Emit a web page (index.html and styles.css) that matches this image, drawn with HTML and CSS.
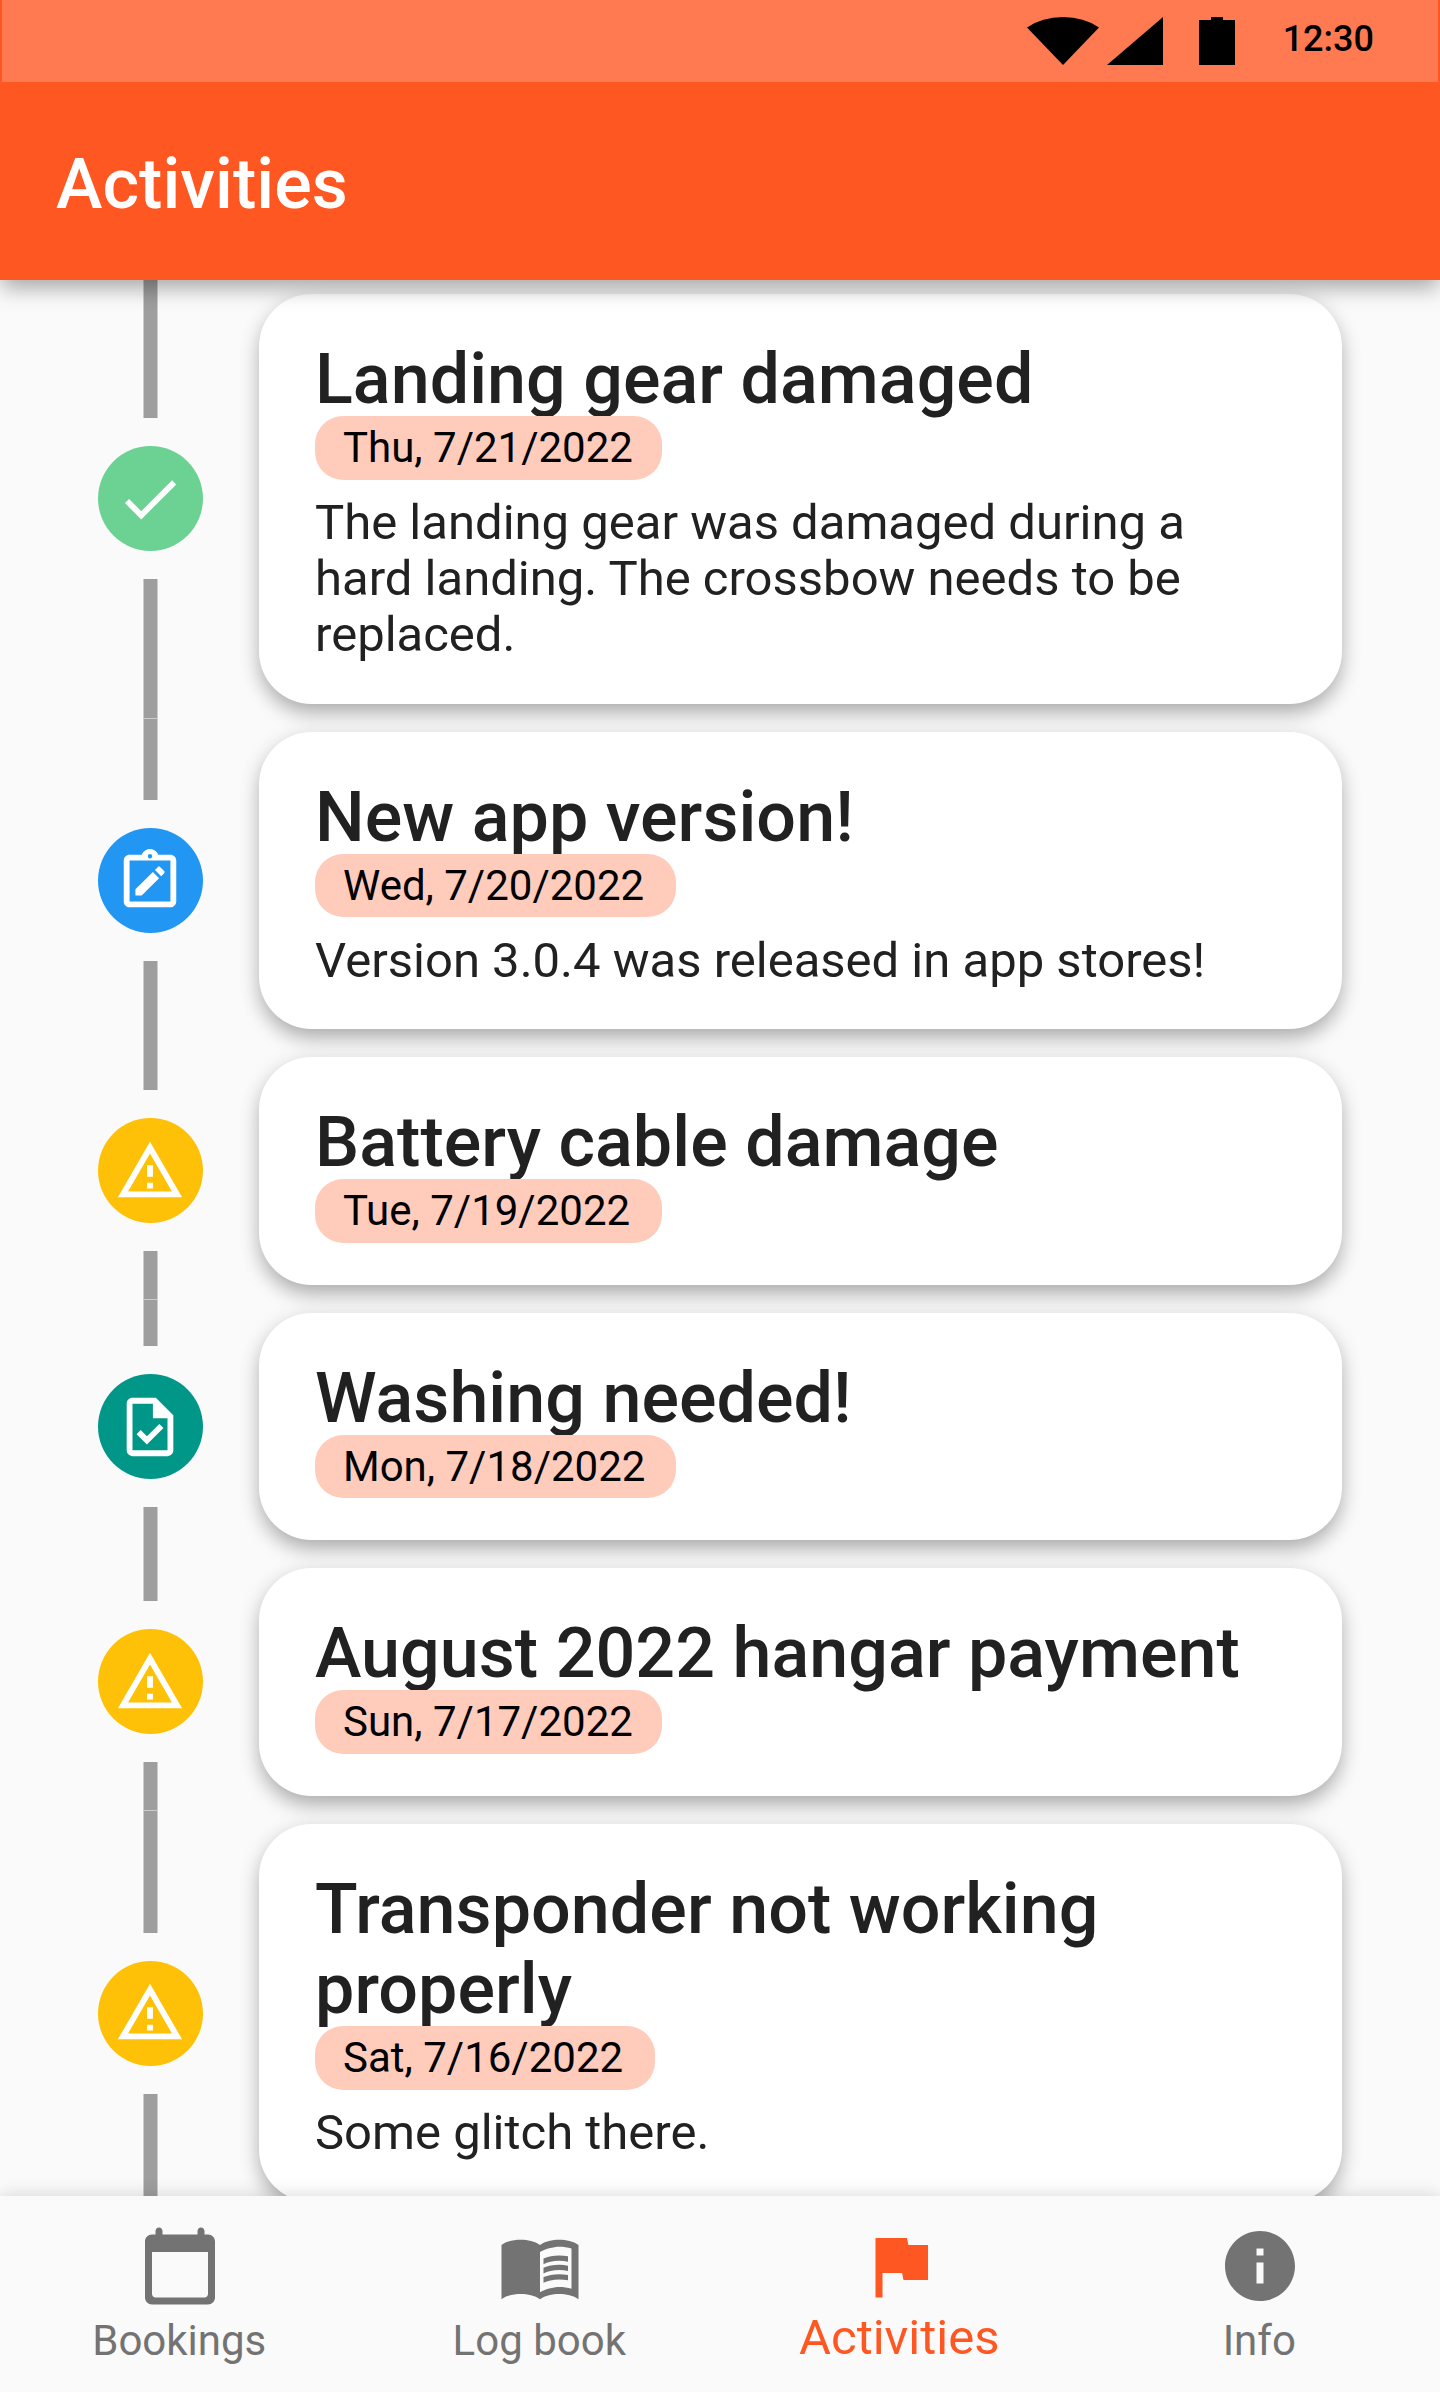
FILE: index.html
```html
<!DOCTYPE html>
<html lang="en">
<head>
<meta charset="utf-8">
<title>Activities</title>
<link rel="stylesheet" href="styles.css">
</head>
<body>
<svg class="sprite" aria-hidden="true">
  <symbol id="i-check" viewBox="0 0 24 24"><path d="M9 16.17L4.83 12l-1.42 1.41L9 19 21 7l-1.41-1.41z"/></symbol>
  <symbol id="i-edit" viewBox="0 0 24 24"><path fill-rule="evenodd" d="M19 3h-4.18C14.4 1.84 13.3 1 12 1s-2.4.84-2.82 2H5c-1.1 0-2 .9-2 2v14c0 1.1.9 2 2 2h14c1.1 0 2-.9 2-2V5c0-1.1-.9-2-2-2zm-7-.25a.75.75 0 1 1 0 1.5.75.75 0 0 1 0-1.5zM5 5h14v14H5z"/><path d="M7 14.85V17h2.15l5.96-5.95-2.12-2.12zM16.85 8.6l-1.4-1.4c-.2-.2-.51-.2-.71 0l-1.04 1.03 2.12 2.12 1.03-1.04c.2-.2.2-.51 0-.71z"/></symbol>
  <symbol id="i-warn" viewBox="0 0 24 24"><path d="M12 5.99L19.53 19H4.47L12 5.99M12 2L1 21h22L12 2zm1 14h-2v2h2v-2zm0-6h-2v4h2v-4z"/></symbol>
  <symbol id="i-task" viewBox="0 0 24 24"><path d="M14 2H6c-1.1 0-1.99.9-1.99 2L4 20c0 1.1.89 2 1.99 2H18c1.1 0 2-.9 2-2V8l-6-6zm4 18H6V4h7v5h5v11zM8.82 13.05L7.4 14.46 10.94 18l5.66-5.66-1.41-1.41-4.24 4.24-2.13-2.12z"/></symbol>
</svg>

<div class="app">
  <header class="appbar">
    <div class="status">
      <svg class="wifi" viewBox="0 0 72 48"><path d="M36 48L0 10.500Q15 0 36 0T72 10.500z"/></svg>
      <svg class="cell" viewBox="0 0 56 48"><path d="M56 0V48H0z"/></svg>
      <svg class="battery" viewBox="0 0 36 48"><path d="M12 0h12v3h12v45H0V3h12z"/></svg>
      <span class="clock">12:30</span>
    </div>
    <h1 class="heading">Activities</h1>
  </header>

  <main class="list">
    <section class="tile">
      <div class="rail"><i class="bar"></i><span class="dot green"><svg><use href="#i-check"/></svg></span><i class="bar"></i></div>
      <article class="card"><h2 class="title">Landing gear damaged</h2><span class="date">Thu, 7/21/2022</span><p class="text">The landing gear was damaged during a hard landing. The crossbow needs to be replaced.</p></article>
    </section>
    <section class="tile">
      <div class="rail"><i class="bar seam"></i><span class="dot blue"><svg><use href="#i-edit"/></svg></span><i class="bar"></i></div>
      <article class="card"><h2 class="title">New app version!</h2><span class="date wide">Wed, 7/20/2022</span><p class="text">Version 3.0.4 was released in app stores!</p></article>
    </section>
    <section class="tile">
      <div class="rail"><i class="bar"></i><span class="dot amber"><svg><use href="#i-warn"/></svg></span><i class="bar"></i></div>
      <article class="card"><h2 class="title">Battery cable damage</h2><span class="date">Tue, 7/19/2022</span></article>
    </section>
    <section class="tile">
      <div class="rail"><i class="bar seam"></i><span class="dot teal"><svg><use href="#i-task"/></svg></span><i class="bar"></i></div>
      <article class="card"><h2 class="title">Washing needed!</h2><span class="date wide">Mon, 7/18/2022</span></article>
    </section>
    <section class="tile">
      <div class="rail"><i class="bar"></i><span class="dot amber"><svg><use href="#i-warn"/></svg></span><i class="bar"></i></div>
      <article class="card"><h2 class="title">August 2022 hangar payment</h2><span class="date">Sun, 7/17/2022</span></article>
    </section>
    <section class="tile">
      <div class="rail"><i class="bar seam"></i><span class="dot amber"><svg><use href="#i-warn"/></svg></span><i class="bar"></i></div>
      <article class="card"><h2 class="title">Transponder not working properly</h2><span class="date narrow">Sat, 7/16/2022</span><p class="text">Some glitch there.</p></article>
    </section>
  </main>

  <nav class="nav">
    <a class="tab"><svg viewBox="0 0 24 24"><path d="M20 3h-1V2c0-.55-.45-1-1-1s-1 .45-1 1v1H7V2c0-.55-.45-1-1-1s-1 .45-1 1v1H4c-1.100 0-2 .9-2 2v16c0 1.100.9 2 2 2h16c1.100 0 2-.9 2-2V5c0-1.100-.9-2-2-2zm-1 18H5c-.55 0-1-.45-1-1V8h16v12c0 .55-.45 1-1 1z"/></svg><span>Bookings</span></a>
    <a class="tab"><svg viewBox="0 0 24 24"><path d="M17.5 4.500c-1.950 0-4.050.4-5.500 1.500-1.450-1.100-3.550-1.500-5.500-1.500S2.450 4.900 1 6v15.500C2.450 20.400 4.550 20 6.500 20s4.050.4 5.500 1.500c1.450-1.100 3.550-1.500 5.500-1.500s4.050.4 5.500 1.500V6c-1.450-1.100-3.550-1.500-5.500-1.500zM21 18.500c-1.100-.35-2.300-.5-3.500-.5-1.700 0-4.150.65-5.500 1.500V8c1.350-.85 3.800-1.500 5.500-1.500 1.200 0 2.400.15 3.500.5v11.500z"/><path d="M17.500 10.500c.88 0 1.730.09 2.500.26V9.240c-.79-.15-1.640-.24-2.500-.24-1.700 0-3.240.29-4.500.83v1.660c1.130-.64 2.700-.99 4.500-.99zM13 12.490v1.660c1.130-.64 2.700-.99 4.500-.99.88 0 1.730.09 2.500.26V11.900c-.79-.15-1.640-.24-2.500-.24-1.700 0-3.240.3-4.500.83zM17.500 14.330c-1.700 0-3.240.29-4.500.83v1.660c1.130-.64 2.700-.99 4.500-.99.88 0 1.730.09 2.500.26v-1.520c-.79-.16-1.640-.24-2.500-.24z"/></svg><span>Log book</span></a>
    <a class="tab active"><svg viewBox="0 0 24 24"><path d="M14.400 6L14 4H5v17h2v-7h5.600l.4 2h7V6z"/></svg><span>Activities</span></a>
    <a class="tab"><svg viewBox="0 0 24 24"><path d="M12 2C6.480 2 2 6.480 2 12s4.480 10 10 10 10-4.480 10-10S17.520 2 12 2zm1 15h-2v-6h2v6zm0-8h-2V7h2v2z"/></svg><span>Info</span></a>
  </nav>
</div>
</body>
</html>
```
FILE: styles.css
```css
* { box-sizing: border-box; }

body {
  margin: 0;
  background: #fafafa;
  font-family: Roboto, "Liberation Sans", sans-serif;
  color: #212121;
}

.sprite { display: none; }

.app {
  display: flex;
  flex-direction: column;
  height: 2392px;
  overflow: hidden;
}

/* Top bar */
.appbar {
  position: relative;
  z-index: 1;
  flex: none;
  height: 280px;
  background: #ff5722;
  box-shadow: 0 11px 20px -2px rgba(0, 0, 0, .26), 0 3px 22px rgba(0, 0, 0, .1);
}

.status {
  display: flex;
  height: 82px;
  margin: 0 2px;
  padding: 17px 64px 0 0;
  justify-content: flex-end;
  background: #ff7a50;
  color: #000;
}

.status svg { height: 48px; flex: none; }
.wifi { width: 72px; margin-right: 8px; }
.cell { width: 56px; margin-right: 36px; }
.battery { width: 36px; margin-right: 47.5px; }

.clock {
  font-size: 36px;
  font-weight: 500;
  line-height: 44px;
}

.heading {
  margin: 61px 56px 0;
  font-size: 70px;
  font-weight: 500;
  line-height: 82px;
  letter-spacing: .05px;
  color: #fff;
}

/* Timeline */
.list {
  flex: 1;
  min-height: 0;
  overflow: hidden;
}

.tile {
  display: grid;
  grid-template-columns: 189px 1fr;
  padding: 0 84px 0 56px;
}

.rail {
  display: flex;
  flex-direction: column;
  align-items: center;
  gap: 28px;
}

.bar {
  flex: 1;
  width: 15px;
  background: #9e9e9e;
  border: solid #ccc;
  border-width: 0 1px;
}

.bar.seam { border-top-width: 1px; }

.dot {
  display: flex;
  width: 105px;
  height: 105px;
  align-items: center;
  justify-content: center;
  border-radius: 50%;
}

.dot svg { width: 70px; height: 70px; margin-right: 1px; fill: #fff; }

.green { background: #6cd294; }
.blue { background: #2196f3; }
.amber { background: #ffc107; }
.teal { background: #009688; }

.card {
  display: flex;
  flex-direction: column;
  align-items: flex-start;
  margin: 14px;
  padding: 45px 56px 42px;
  border-radius: 52.5px;
  background: #fff;
  box-shadow: 0 11px 20px -2px rgba(0, 0, 0, .26), 0 3px 22px rgba(0, 0, 0, .1);
}

.title {
  margin: 0;
  font-size: 70px;
  font-weight: 500;
  line-height: 80.5px;
  letter-spacing: .05px;
}

.date {
  width: 346.5px;
  height: 63.5px;
  margin-top: -3.5px;
  padding: 0 0 0 28px;
  border-radius: 28px;
  background: #ffccbc;
  font-size: 42px;
  line-height: 63px;
  white-space: nowrap;
  color: #000;
}

.date.wide { width: 360.5px; }
.date.narrow { width: 339.5px; }

.text {
  margin: 15.5px 0 -1.5px;
  font-size: 49px;
  line-height: 56px;
}

/* Bottom navigation */
.nav {
  position: relative;
  z-index: 1;
  display: flex;
  flex: none;
  height: 196px;
  background: #fafafa;
  box-shadow: 0 0 18px rgba(0, 0, 0, .16);
}

.tab {
  display: flex;
  flex: 1;
  flex-direction: column;
  align-items: center;
  padding-top: 28px;
  font-size: 42px;
  line-height: 49px;
  color: #737373;
}

.tab svg { width: 84px; height: 84px; margin-bottom: 8px; fill: currentColor; }
.tab span { margin-right: 1.5px; }
.tab.active { font-size: 49px; color: #ff5722; }
.tab.active svg { margin-bottom: 5px; }
```
